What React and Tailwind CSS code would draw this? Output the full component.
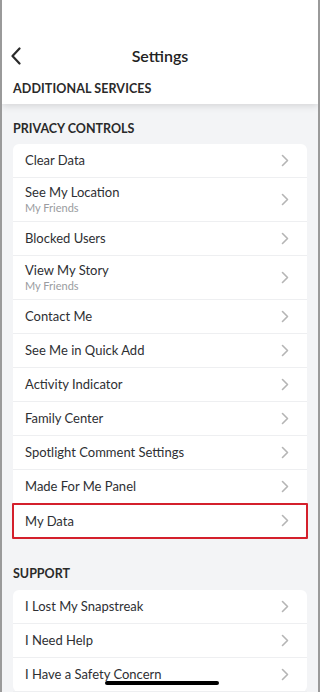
import React from "react";

const Chevron = () => (
  <svg width="8" height="13" viewBox="0 0 8 13" fill="none" className="shrink-0">
    <path d="M1.5 1.5 L6.5 6.5 L1.5 11.5" stroke="#b5b5b5" strokeWidth="1.6" strokeLinecap="round" strokeLinejoin="round" />
  </svg>
);

function Row({ title, sub, last, highlight }) {
  return (
    <div className={`relative flex items-center justify-between pl-[12px] pr-[18px] ${sub ? "h-[44px]" : "h-[34px]"} ${last ? "" : "border-b border-[#eeeff1]"}`}>
      <div className="flex flex-col">
        <span className="text-[13px] leading-[16px] text-[#2e2f33]">{title}</span>
        {sub && <span className="text-[11px] leading-[15px] text-[#9a9ca0]">{sub}</span>}
      </div>
      <Chevron />
      {highlight && <div className="absolute inset-[-1px] border-2 border-[#d4202c] rounded-[1px] pointer-events-none" />}
    </div>
  );
}

export default function App() {
  const privacy = [
    { title: "Clear Data" },
    { title: "See My Location", sub: "My Friends" },
    { title: "Blocked Users" },
    { title: "View My Story", sub: "My Friends" },
    { title: "Contact Me" },
    { title: "See Me in Quick Add" },
    { title: "Activity Indicator" },
    { title: "Family Center" },
    { title: "Spotlight Comment Settings" },
    { title: "Made For Me Panel" },
    { title: "My Data", highlight: true },
  ];
  const support = [
    { title: "I Lost My Snapstreak" },
    { title: "I Need Help" },
    { title: "I Have a Safety Concern" },
  ];
  return (
    <div className="relative w-[320px] h-[692px] overflow-hidden bg-[#f3f4f6] border-x-2 border-[#9a9a9a]" style={{ fontFamily: "Lato, 'Noto Sans', sans-serif" }}>
      <div className="bg-white h-[104px] relative z-10 shadow-[0_2px_7px_rgba(0,0,0,0.13)]">
        <div className="h-[38px]" />
        <div className="relative flex items-center justify-center h-[36px]">
          <svg width="12" height="18" viewBox="0 0 12 18" fill="none" className="absolute left-[8px] top-[9px]">
            <path d="M9.5 1.5 L2.5 9 L9.5 16.5" stroke="#2a2a2a" strokeWidth="2.2" strokeLinecap="round" strokeLinejoin="round" />
          </svg>
          <span className="text-[16px] font-semibold text-[#222]">Settings</span>
        </div>
        <div className="px-[11px] pt-[6px] text-[12.5px] font-bold text-[#2a2a2a] tracking-[0.1px]">ADDITIONAL SERVICES</div>
      </div>
      <div className="px-[11px] pt-[16px] pb-[5px] text-[12.5px] font-bold text-[#2a2a2a]">PRIVACY CONTROLS</div>
      <div className="mx-[11px] bg-white rounded-[6px]">
        {privacy.map((r, i) => (
          <Row key={r.title} {...r} last={i === privacy.length - 1} />
        ))}
      </div>
      <div className="px-[11px] pt-[27px] pb-[6px] text-[12.5px] font-bold text-[#2a2a2a]">SUPPORT</div>
      <div className="mx-[11px] bg-white rounded-[6px]">
        {support.map((r, i) => (
          <Row key={r.title} {...r} />
        ))}
      </div>
      <div className="absolute left-[103px] top-[681px] w-[114px] h-[4px] rounded-full bg-black" />
    </div>
  );
}
